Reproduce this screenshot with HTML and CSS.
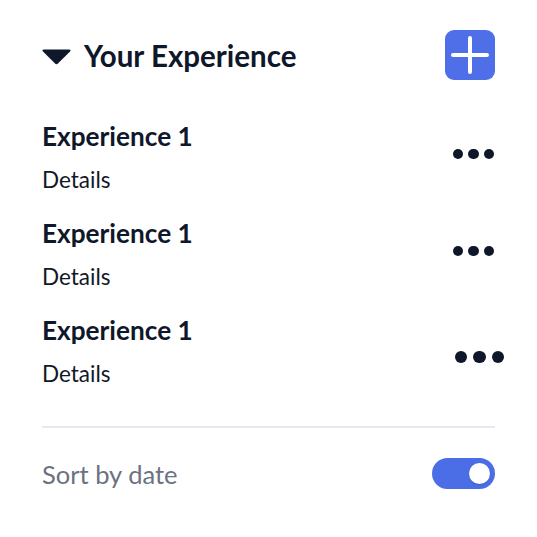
FILE: index.html
```html
<!DOCTYPE html>
<html lang="en">
<head>
<meta charset="utf-8">
<title>Your Experience</title>
<link rel="stylesheet" href="styles.css">
</head>
<body>
<div class="panel">
  <div class="header">
    <div class="title">
      <svg class="caret" width="31" height="17" viewBox="0 0 31 17"><path d="M3 1.5 H28 Q30.5 1.5 29 3.5 L17.2 15.3 Q15.5 17 13.8 15.3 L2 3.5 Q0.5 1.5 3 1.5 Z" fill="#0f172a"/></svg>
      <h2 class="title-text">Your Experience</h2>
    </div>
    <button class="add-btn" aria-label="Add">
      <svg width="50" height="50" viewBox="0 0 50 50"><path d="M25 8 V42 M8 25 H42" stroke="#fff" stroke-width="4" stroke-linecap="round"/></svg>
    </button>
  </div>
  <ul class="list">
    <li class="item">
      <div class="item-text"><div class="item-title">Experience 1</div><div class="item-details">Details</div></div>
      <div class="dots"><span></span><span></span><span></span></div>
    </li>
    <li class="item">
      <div class="item-text"><div class="item-title">Experience 1</div><div class="item-details">Details</div></div>
      <div class="dots"><span></span><span></span><span></span></div>
    </li>
    <li class="item">
      <div class="item-text"><div class="item-title">Experience 1</div><div class="item-details">Details</div></div>
      <div class="dots dots-lg"><span></span><span></span><span></span></div>
    </li>
  </ul>
  <div class="footer">
    <span class="sort-label">Sort by date</span>
    <span class="toggle"><span class="knob"></span></span>
  </div>
</div>
</body>
</html>
```
FILE: styles.css
```css
html, body { margin: 0; padding: 0; background: #fff; }
body { font-family: "Lato", "Open Sans", sans-serif; color: #0f172a; }
.panel { padding: 30px 42px 0 42px; }
.header { display: flex; align-items: center; justify-content: space-between; height: 50px; }
.title { display: flex; align-items: center; gap: 12px; }
.caret { display: block; margin-top: 3px; margin-left: -1px; }
.title-text { margin: 0; font-size: 29.5px; font-weight: 700; letter-spacing: 0; }
.add-btn { width: 50px; height: 50px; border: 0; padding: 0; border-radius: 9px; background: #4f6fe8; display: flex; align-items: center; justify-content: center; }
.add-btn svg { display: block; }
.list { list-style: none; margin: 41px 0 0 0; padding: 0; display: flex; flex-direction: column; gap: 24px; }
.item { display: flex; align-items: center; justify-content: space-between; }
.item-title { font-size: 26.2px; font-weight: 700; line-height: 30px; }
.item-details { font-size: 22.5px; line-height: 28px; margin-top: 15px; color: #111827; }
.dots { display: flex; gap: 5px; margin-right: 1px; margin-bottom: 7px; }
.dots span { width: 10.5px; height: 10.5px; border-radius: 50%; background: #0f172a; }
.dots-lg { gap: 6px; margin-right: -9px; margin-bottom: 0; margin-top: 11px; }
.dots-lg span { width: 12.5px; height: 12.5px; }
.footer { margin-top: 38px; border-top: 2px solid #e5e9f2; padding-top: 30px; display: flex; align-items: center; justify-content: space-between; }
.sort-label { font-size: 25.5px; color: #6b7280; }
.toggle { width: 63px; height: 31px; border-radius: 16px; background: #4b6ee6; display: flex; align-items: center; justify-content: flex-end; padding-right: 5px; box-sizing: border-box; }
.knob { width: 21px; height: 21px; border-radius: 50%; background: #fff; box-shadow: 0 1px 2px rgba(0,0,0,0.15); }
```
